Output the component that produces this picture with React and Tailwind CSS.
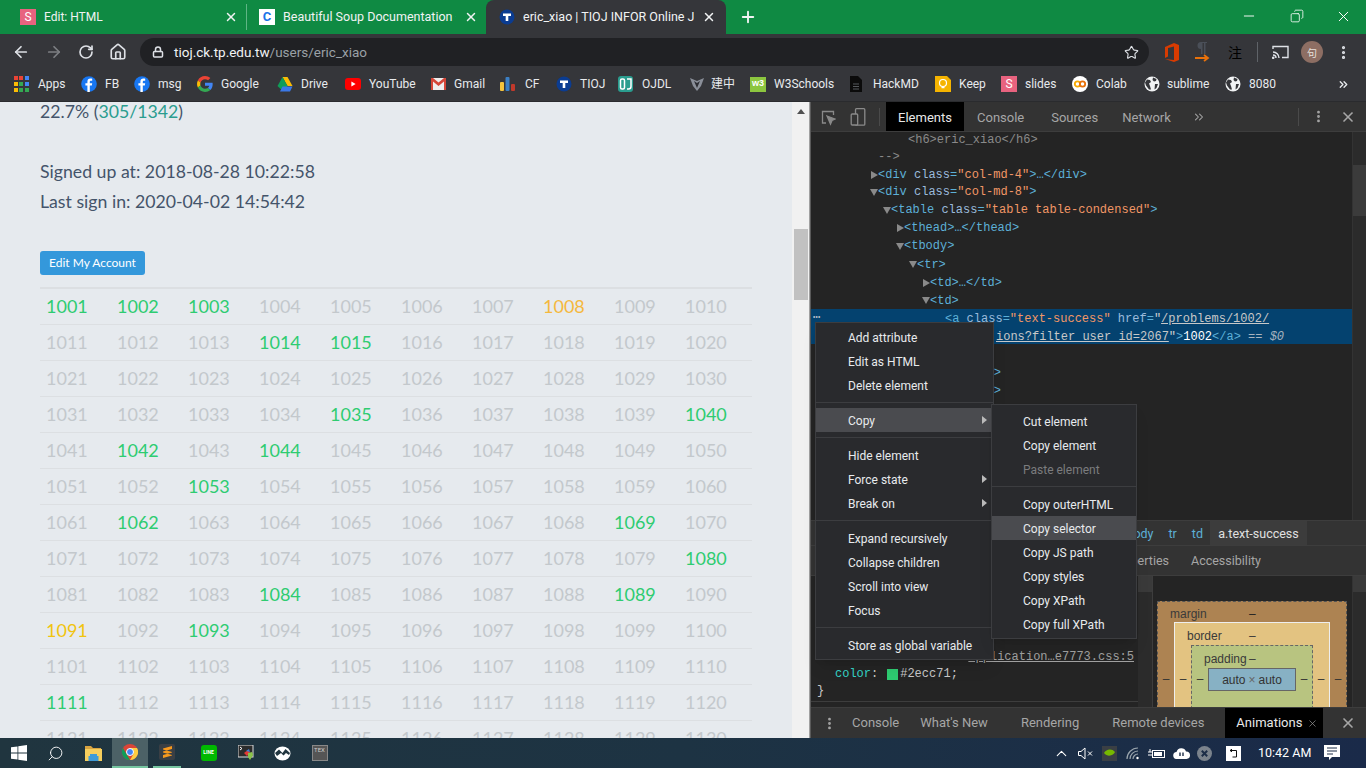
import React from 'react';
import { ArrowLeft, ArrowRight, RotateCw, Home, Lock, Star, X, Plus, Minus, Search, MoreVertical, ChevronsRight, ChevronUp, Copy as CopyIcon } from 'lucide-react';

const UI = "font-['Roboto',sans-serif]";

const SBadge = () => (
    <div className="bg-[#e8637f] text-white flex items-center justify-center w-4 h-4 text-[12px] shrink-0">S</div>
);
const TIcon = () => (
    <svg width="16" height="16" viewBox="0 0 16 16" className="shrink-0">
        <circle cx="8" cy="8" r="7.5" fill="#0b3c91" />
        <path d="M4 4.5h8v2.4H9.3V12H6.7V6.9H4z" fill="#fff" />
    </svg>
);
const FbIcon = () => (
    <svg width="16" height="16" viewBox="0 0 16 16" className="shrink-0">
        <circle cx="8" cy="8" r="7.8" fill="#1877f2" />
        <path d="M8.8 16V9.6h2l.4-2.3H8.8V6c0-.8.3-1.2 1.2-1.2h1.2v-2c-.6-.1-1.2-.2-1.8-.2-1.9 0-3 1.1-3 3.1v1.600H4.400v2.300h2V16z" fill="#fff" />
    </svg>
);
const GoogleIcon = () => (
    <svg width="16" height="16" viewBox="0 0 48 48" className="shrink-0">
        <path fill="#EA4335" d="M24 9.500c3.500 0 6.700 1.200 9.200 3.600l6.900-6.900C35.900 2.400 30.500 0 24 0 14.600 0 6.500 5.400 2.600 13.200l8 6.200C12.400 13.700 17.700 9.500 24 9.500z" />
        <path fill="#4285F4" d="M47 24.500c0-1.600-.1-3.100-.4-4.500H24v9h12.900c-.6 3-2.200 5.500-4.700 7.200l7.700 6C44.400 38.100 47 31.900 47 24.500z" />
        <path fill="#FBBC05" d="M10.500 28.600C10 27.200 9.800 25.600 9.800 24s.3-3.200.8-4.600l-8-6.200C.9 16.500 0 20.100 0 24s.9 7.500 2.600 10.800z" />
        <path fill="#34A853" d="M24 48c6.500 0 11.900-2.100 15.900-5.800l-7.700-6c-2.200 1.500-4.900 2.300-8.200 2.300-6.300 0-11.600-4.200-13.500-9.900l-8 6.200C6.500 42.600 14.600 48 24 48z" />
    </svg>
);
const DriveIcon = () => (
    <svg width="16" height="15" viewBox="0 0 16 15" className="shrink-0">
        <path d="M5.500 0h5l5 9h-5z" fill="#fbbc04" />
        <path d="M5.500 0l5 9-2.500 5-2.500-.2L0.500 9z" fill="#0f9d58" />
        <path d="M3 14.500l2.500-5h10l-2.500 5z" fill="#3b78e7" />
    </svg>
);
const YtIcon = () => (
    <svg width="16" height="12" viewBox="0 0 16 12" className="shrink-0">
        <rect width="16" height="12" rx="3" fill="#f00" />
        <path d="M6.400 3.400L10.600 6l-4.200 2.600z" fill="#fff" />
    </svg>
);
const GmailIcon = () => (
    <svg width="15" height="12" viewBox="0 0 15 12" className="shrink-0">
        <rect width="15" height="12" fill="#eee" />
        <path d="M0 0h2l5.500 4.500L13 0h2v12h-2V3.500L7.500 8 2 3.500V12H0z" fill="#d44638" />
    </svg>
);
const CfIcon = () => (
    <svg width="15" height="14" viewBox="0 0 15 14" className="shrink-0">
        <rect x="0" y="5" width="4" height="9" rx="1" fill="#f5c33b" />
        <rect x="5.500" y="0" width="4" height="14" rx="1" fill="#3b7fc4" />
        <rect x="11" y="7" width="4" height="7" rx="1" fill="#c0392b" />
    </svg>
);
const OjIcon = () => (
    <svg width="15" height="16" viewBox="0 0 15 16" className="shrink-0">
        <rect width="15" height="16" rx="3" fill="#2a9d8f" />
        <rect x="2.500" y="3" width="4" height="10" rx="1.500" fill="none" stroke="#fff" strokeWidth="1.500" />
        <path d="M9 3h4v7.500c0 1.500-1 2.500-2.500 2.500H9" fill="none" stroke="#fff" strokeWidth="1.500" />
    </svg>
);
const SpearIcon = () => (
    <svg width="14" height="14" viewBox="0 0 14 14" className="shrink-0">
        <path d="M0 1l7 3 7-3-3 8-4 5-4-5z" fill="#8a8f99" />
        <path d="M4 4l3 2 3-2-3 7z" fill="#2c2d33" />
    </svg>
);
const W3Icon = () => (
    <div className="w-4 h-[15px] bg-[#8cc63f] text-white text-[9px] font-bold flex items-center justify-center shrink-0 font-['Liberation_Sans',sans-serif]">w3</div>
);
const DocIcon = () => (
    <svg width="12" height="16" viewBox="0 0 12 16" className="shrink-0">
        <path d="M0 0h8l4 4v12H0z" fill="#0b0b0b" />
        <path d="M3 8h6M3 10.500h6M3 13h6" stroke="#55585c" strokeWidth="1" />
    </svg>
);
const KeepIcon = () => (
    <svg width="16" height="16" viewBox="0 0 16 16" className="shrink-0">
        <path d="M0 0h12l4 4v12H0z" fill="#f5b400" />
        <circle cx="8" cy="7" r="3.500" fill="none" stroke="#fff" strokeWidth="1.200" />
        <path d="M6.500 11.500h3" stroke="#fff" strokeWidth="1.500" />
    </svg>
);
const ColabIcon = () => (
    <svg width="16" height="16" viewBox="0 0 16 16" className="shrink-0">
        <circle cx="8" cy="8" r="8" fill="#fff" />
        <circle cx="5.500" cy="8" r="2.700" fill="none" stroke="#f9ab00" strokeWidth="1.800" />
        <circle cx="10.500" cy="8" r="2.700" fill="none" stroke="#e8710a" strokeWidth="1.800" />
    </svg>
);
const GlobeIcon = () => (
    <svg width="16" height="16" viewBox="0 0 16 16" className="shrink-0">
        <circle cx="8" cy="8" r="7.500" fill="#f1f3f4" />
        <path d="M3 3.500l3 .5 1 2-2 1.500 1 2.500 1 3.500-2 0-3-4-1-3zM9 1.500l3.500 1.500-.5 2-2 .5-1.500-1.500zM11 8l3 0-1.500 4-2 1.500z" fill="#35363a" />
    </svg>
);
const AppsIcon = () => (
    <div className="grid grid-cols-3 gap-[2px] w-[14px] shrink-0">
        {['#ea4335', '#ea4335', '#4285f4', '#fbbc05', '#34a853', '#4285f4', '#fbbc05', '#34a853', '#34a853'].map((c, i) => (
            <svg key={i} width="4" height="4"><rect width="4" height="4" fill={c} /></svg>
        ))}
    </div>
);

const bookmarks = [
    { w: 'w-[67px]', icon: <AppsIcon />, gap: 'gap-[10px]', label: 'Apps' },
    { w: 'w-[53px]', icon: <FbIcon />, gap: 'gap-[8px]', label: 'FB' },
    { w: 'w-[63px]', icon: <FbIcon />, gap: 'gap-[8px]', label: 'msg' },
    { w: 'w-[80px]', icon: <GoogleIcon />, gap: 'gap-[8px]', label: 'Google' },
    { w: 'w-[68px]', icon: <DriveIcon />, gap: 'gap-[8px]', label: 'Drive' },
    { w: 'w-[86px]', icon: <YtIcon />, gap: 'gap-[8px]', label: 'YouTube' },
    { w: 'w-[69px]', icon: <GmailIcon />, gap: 'gap-[8px]', label: 'Gmail' },
    { w: 'w-[56px]', icon: <CfIcon />, gap: 'gap-[10px]', label: 'CF' },
    { w: 'w-[62px]', icon: <TIcon />, gap: 'gap-[8px]', label: 'TIOJ' },
    { w: 'w-[72px]', icon: <OjIcon />, gap: 'gap-[9px]', label: 'OJDL' },
    { w: 'w-[60px]', icon: <SpearIcon />, gap: 'gap-[7px]', label: '建中' },
    { w: 'w-[100px]', icon: <W3Icon />, gap: 'gap-[8px]', label: 'W3Schools' },
    { w: 'w-[85px]', icon: <DocIcon />, gap: 'gap-[11px]', label: 'HackMD' },
    { w: 'w-[66px]', icon: <KeepIcon />, gap: 'gap-[8px]', label: 'Keep' },
    { w: 'w-[71px]', icon: <SBadge />, gap: 'gap-[8px]', label: 'slides' },
    { w: 'w-[72px]', icon: <ColabIcon />, gap: 'gap-[8px]', label: 'Colab' },
    { w: 'w-[81px]', icon: <GlobeIcon />, gap: 'gap-[7px]', label: 'sublime' },
    { w: 'w-[60px]', icon: <GlobeIcon />, gap: 'gap-[8px]', label: '8080' },
];

function Tabs() {
    return (
        <div className={`h-[34px] bg-[#0f8a43] flex text-[12.5px] text-[#f1f3f4] ${UI}`}>
            <div className="w-[246px] flex items-center pl-5 pr-2 gap-[8px]">
                <SBadge />
                <span className="flex-1 text-[12px]">Edit: HTML</span>
                <X size={14} strokeWidth={2.5} />
            </div>
            <div className="w-px h-[26px] mt-1 bg-[#5fb585]" />
            <div className="w-[239px] flex items-center pl-3 pr-2 gap-2">
                <div className="w-4 h-4 bg-white text-[#1a73e8] font-bold text-[13px] leading-4 text-center shrink-0">C</div>
                <span className="flex-1 whitespace-nowrap overflow-hidden">Beautiful Soup Documentation —</span>
                <X size={14} strokeWidth={2.5} />
            </div>
            <div className="w-[240px] bg-[#35363a] rounded-t-lg flex items-center pl-[13px] pr-[10px] gap-2">
                <TIcon />
                <span className="flex-1 whitespace-nowrap overflow-hidden">eric_xiao | TIOJ INFOR Online Jud</span>
                <X size={14} strokeWidth={2.5} />
            </div>
            <div className="ml-[13px] flex items-center">
                <Plus size={18} strokeWidth={2.5} />
            </div>
            <div className="flex-1 flex justify-end pr-[14px] pt-2 gap-[31px] text-white">
                <Minus size={16} strokeWidth={1.4} />
                <CopyIcon size={14} strokeWidth={1.4} className="mt-[1px] -scale-x-100 ml-[2px]" />
                <X size={17} strokeWidth={1.4} />
            </div>
        </div>
    );
}

function Toolbar() {
    return (
        <div className={`h-[36px] bg-[#35363a] flex items-center pl-[12px] pr-[14px] text-[#dee1e6] ${UI}`}>
            <ArrowLeft size={18} strokeWidth={2.3} />
            <ArrowRight size={18} strokeWidth={2.3} className="ml-[15px] text-[#7d7f83]" />
            <RotateCw size={16} strokeWidth={2.5} className="ml-[15px]" />
            <Home size={18} strokeWidth={2.2} className="ml-[15px]" />
            <div className="ml-[13px] w-[1009px] h-[28px] rounded-full bg-[#202124] flex items-center pl-[12px] pr-[10px]">
                <Lock size={12} strokeWidth={3} />
                <span className="ml-[10px] text-[13.5px] text-[#f1f3f4]">tioj.ck.tp.edu.tw</span>
                <span className="text-[13.5px] text-[#9aa0a6]">/users/eric_xiao</span>
                <Star size={15} strokeWidth={1.8} className="ml-auto" />
            </div>
            <svg width="15" height="19" viewBox="0 0 15 19" className="ml-[16px]">
                <path d="M0 4l9-4 5 2v15l-5 2-9-3 9 1V3.500L3 5v8.500L0 15z" fill="#d83b01" />
            </svg>
            <svg width="16" height="20" viewBox="0 0 16 20" className="ml-[15px]">
                <path d="M6 0h6v1H10.500v11H9V1H7.500v11H6V7a3.500 3.500 0 0 1 0-7z" fill="#4a4f58" />
                <path d="M0 16h12M9 13l4 3-4 3" stroke="#e8710a" strokeWidth="1.800" fill="none" />
            </svg>
            <span className="ml-[17px] text-[14px] text-black font-['Noto_Sans_CJK_TC',sans-serif]">注</span>
            <div className="ml-[15px] w-px h-[20px] bg-[#5f6368]" />
            <svg width="17" height="14" viewBox="0 0 17 14" fill="none" stroke="#dee1e6" strokeWidth="1.400" className="ml-[14px]">
                <path d="M1 4V1.500h15v11h-6M1 7a6 6 0 0 1 6 6M1 10a3 3 0 0 1 3 3" />
                <circle cx="1.200" cy="12.800" r=".6" fill="#dee1e6" />
            </svg>
            <div className="ml-[12px] w-[22px] h-[22px] rounded-full bg-[#8d6e63] text-[#e8e0dc] text-[10px] flex items-center justify-center font-['Noto_Sans_CJK_TC',sans-serif]">句</div>
            <MoreVertical size={17} strokeWidth={2.5} className="ml-[12px]" />
        </div>
    );
}

function Bookmarks() {
    return (
        <div className={`h-[32px] bg-[#35363a] flex items-center pl-[14px] pb-[3px] text-[12px] text-[#e8eaed] border-b border-[#2a2b2e] ${UI}`}>
            {bookmarks.map((b, i) => (
                <div key={i} className={`flex items-center shrink-0 ${b.w} ${b.gap}`}>
                    {b.icon}
                    <span className="whitespace-nowrap font-['Roboto','Noto_Sans_CJK_TC',sans-serif]">{b.label}</span>
                </div>
            ))}
            <ChevronsRight size={13} strokeWidth={2.5} className="ml-[52px]" />
        </div>
    );
}

const solved = [1001, 1002, 1003, 1014, 1015, 1035, 1040, 1042, 1044, 1053, 1062, 1069, 1080, 1084, 1089, 1093, 1111];
const rows = Array.from({ length: 13 }, (_, r) => Array.from({ length: 10 }, (_, c) => 1001 + r * 10 + c));

function numColor(n) {
    if (n === 1008) return 'text-[#f5b83d]';
    if (n === 1091) return 'text-[#f1c40f]';
    if (solved.includes(n)) return 'text-[#2ecc71]';
    return 'text-[#c3c8cc]';
}

function Page() {
    return (
        <div className="w-[792px] bg-[#e6eaee] overflow-hidden pl-10 pt-[1px] font-['Lato',sans-serif] text-[#44546a] text-[17.7px]">
            <p className="h-[18px] leading-[18px]">22.7% (<span className="text-[#2a9d8f]">305/1342</span>)</p>
            <p className="mt-[36px] leading-[30px]">Signed up at: 2018-08-28 10:22:58</p>
            <p className="leading-[30px]">Last sign in: 2020-04-02 14:54:42</p>
            <button className="mt-[34px] w-[105px] h-[24px] rounded-[3px] bg-[#3498db] text-white text-[12px] block">Edit My Account</button>
            <div className="mt-[12px] w-[712px] border-t-2 border-[#dcdfe2]">
                {rows.map((row, r) => (
                    <div key={r} className={`grid grid-cols-[repeat(10,71px)] items-center text-[18px] border-[#dcdfe2] ${r === 0 ? 'h-[35px]' : 'h-[36px] border-t'}`}>
                        {row.map(n => (
                            <span key={n} className={`pl-[6px] ${numColor(n)}`}>{n}</span>
                        ))}
                    </div>
                ))}
            </div>
        </div>
    );
}

function PageScrollbar() {
    return (
        <div className="w-[17px] bg-[#f1f1f1] relative flex flex-col items-center">
            <div className="mt-[7px] w-0 h-0 border-x-[4px] border-x-transparent border-b-[5px] border-b-[#505050]" />
            <div className="mt-[115px] w-[14px] h-[71px] bg-[#c1c1c1]" />
        </div>
    );
}

const Tag = ({ children }) => <span className="text-[#5db0d7]">{children}</span>;
const Attr = ({ children }) => <span className="text-[#9bbbdc]">{children}</span>;
const Val = ({ children }) => <span className="text-[#f29766]">{children}</span>;

const Tri = ({ open }) => (
    open
        ? <div className="w-0 h-0 border-x-[4px] border-x-transparent border-t-[7px] border-t-[#8a8a8a] shrink-0" />
        : <div className="w-0 h-0 border-y-[4px] border-y-transparent border-l-[7px] border-l-[#8a8a8a] shrink-0" />
);

function CodeLine({ pad, tri, h = 'h-[18px]', children }) {
    return (
        <div className={`${h} flex items-center whitespace-pre ${pad}`}>
            {tri === 'open' && <Tri open />}
            {tri === 'closed' && <Tri />}
            <span>{children}</span>
        </div>
    );
}

function ElementsPane() {
    return (
        <div className="flex-1 flex font-['Liberation_Mono',monospace] text-[12px] min-h-0">
            <div className="flex-1 overflow-hidden">
                <CodeLine h="h-[16px]" pad="pl-[97px]"><span className="text-[#8a8a8a]">{'<h6>eric_xiao</h6>'}</span></CodeLine>
                <CodeLine pad="pl-[67px]"><span className="text-[#8a8a8a]">{'-->'}</span></CodeLine>
                <CodeLine h="h-[17px]" pad="pl-[60px]" tri="closed"><Tag>{'<div '}</Tag><Attr>class</Attr><Tag>=</Tag><Val>"col-md-4"</Val><Tag>{'>…</div>'}</Tag></CodeLine>
                <CodeLine pad="pl-[59px]" tri="open"><Tag>{'<div '}</Tag><Attr>class</Attr><Tag>=</Tag><Val>"col-md-8"</Val><Tag>{'>'}</Tag></CodeLine>
                <CodeLine pad="pl-[72px]" tri="open"><Tag>{'<table '}</Tag><Attr>class</Attr><Tag>=</Tag><Val>"table table-condensed"</Val><Tag>{'>'}</Tag></CodeLine>
                <CodeLine pad="pl-[86px]" tri="closed"><Tag>{'<thead>…</thead>'}</Tag></CodeLine>
                <CodeLine pad="pl-[85px]" tri="open"><Tag>{'<tbody>'}</Tag></CodeLine>
                <CodeLine h="h-[19px]" pad="pl-[98px]" tri="open"><Tag>{'<tr>'}</Tag></CodeLine>
                <CodeLine pad="pl-[112px]" tri="closed"><Tag>{'<td>…</td>'}</Tag></CodeLine>
                <CodeLine h="h-[17px]" pad="pl-[111px]" tri="open"><Tag>{'<td>'}</Tag></CodeLine>
                <div className="h-[35px] bg-[#04426f] relative pl-[134px] pt-[1px] leading-[18px] whitespace-pre">
                    <span className="absolute left-[2px] top-[-3px] text-[#aeb9c4] font-bold">…</span>
                    <div><Tag>{'<a '}</Tag><Attr>class</Attr><Tag>=</Tag><Val>"text-success"</Val><Attr>{' href'}</Attr><Tag>=</Tag><span className="text-[#cfd0d0]">"</span><span className="text-[#c8c8c8] underline">/problems/1002/</span></div>
                    <div className="pl-[51px]"><span className="text-[#c8c8c8] underline">ions?filter_user_id=2067</span><span className="text-[#cfd0d0]">"</span><Tag>{'>'}</Tag><span className="text-white">1002</span><Tag>{'</a>'}</Tag><span className="text-[#a8b4bf]">{' == '}</span><span className="text-[#a8b4bf] italic">$0</span></div>
                </div>
                <div className="mt-[20px]">
                    <CodeLine pad="pl-[154px]"><Tag>{'</td>'}</Tag></CodeLine>
                    <CodeLine pad="pl-[154px]"><Tag>{'</tr>'}</Tag></CodeLine>
                </div>
            </div>
            <div className="w-[14px] bg-[#2b2b2b] border-l border-[#333]">
                <div className="mt-[33px] h-[51px] bg-[#3b3b3b]" />
            </div>
        </div>
    );
}

function Dash({ pad }) {
    return <div className={`w-[16px] shrink-0 text-center text-[#333] leading-4 ${pad}`}>–</div>;
}

function BoxModel() {
    return (
        <div className="flex-1 overflow-hidden pt-[25px] pl-[4px] pr-[5px] font-['Liberation_Sans',sans-serif] text-[12px] text-[#3a3a3a]">
            <div className="border border-dashed border-[#555] bg-[#ad8352] h-[180px]">
                <div className="h-[20px] flex items-center pt-[3px] pl-[12px]"><span className="w-[79px]">margin</span><span className="text-[#222]">–</span></div>
                <div className="flex">
                    <Dash pad="pt-[49px]" />
                    <div className="flex-1 border border-[#eee] bg-[#e3c381] h-[150px]">
                        <div className="h-[22px] flex items-center pt-[3px] pl-[12px]"><span className="w-[62px]">border</span><span>–</span></div>
                        <div className="flex">
                            <Dash pad="pt-[26px]" />
                            <div className="flex-1 border border-dashed border-[#666] bg-[#b8c480] h-[110px]">
                                <div className="h-[22px] flex items-center pt-[3px] pl-[12px]"><span className="w-[45px]">padding</span><span>–</span></div>
                                <div className="flex">
                                    <Dash pad="pt-[3px]" />
                                    <div className="flex-1 h-[23px] border border-[#666] bg-[#87b1c4] flex items-center justify-center gap-[3px] text-[#333]">
                                        <span>auto</span><span className="text-[#666]">×</span><span>auto</span>
                                    </div>
                                    <Dash pad="pt-[3px]" />
                                </div>
                            </div>
                            <Dash pad="pt-[26px]" />
                        </div>
                    </div>
                    <Dash pad="pt-[49px]" />
                </div>
            </div>
        </div>
    );
}

function Sidebar() {
    return (
        <div className="h-[187px] flex flex-col text-[12.5px]">
            <div className={`h-[26px] flex items-center bg-[#333] border-y border-[#3d3d3d] text-[#d0d0d0] ${UI}`}>
                <span className="ml-auto pt-[3px] text-[#5db0d7]">tbody</span>
                <span className="ml-[15px] pt-[3px] text-[#5db0d7]">tr</span>
                <span className="ml-[15px] pt-[3px] text-[#5db0d7]">td</span>
                <span className="ml-[7px] mr-[59px] w-[97px] h-full pt-[3px] bg-[#3c3c3c] flex items-center justify-center text-[#e0e0e0]">a.text-success</span>
            </div>
            <div className={`h-[30px] flex items-center pt-[1px] bg-[#333] border-b border-[#3d3d3d] text-[#a6a6a6] ${UI}`}>
                <span className="w-[358px] text-right">Properties</span>
                <span className="ml-[22px]">Accessibility</span>
            </div>
            <div className="flex-1 flex min-h-0 bg-[#242424]">
                <div className="w-[327px] font-['Liberation_Mono',monospace] text-[12px] text-[#c9c9c9] flex flex-col justify-end pb-[5px]">
                    <div className="h-[16px] mb-[2px] text-right pr-[4px] text-[#a0a0a0] underline">application…e7773.css:5</div>
                    <div className="h-[16px] pl-[24px] flex items-center">
                        <span className="text-[#35d4c7]">color</span><span>:</span>
                        <div className="w-[11px] h-[11px] bg-[#2ecc71] ml-[9px] mr-[2px]" />
                        <span>#2ecc71;</span>
                    </div>
                    <div className="h-[16px] pl-[6px]">{'}'}</div>
                    <div className="mt-[3px] h-px bg-[#3d3d3d]" />
                </div>
                <div className="w-[15px] bg-[#2b2b2b] border-r border-[#3d3d3d]">
                    <div className="h-[16px] bg-[#3a3a3a]" />
                </div>
                <BoxModel />
                <div className="w-[14px] bg-[#2b2b2b] border-l border-[#333]">
                    <div className="h-[16px] bg-[#3a3a3a]" />
                </div>
            </div>
        </div>
    );
}

function DevTools() {
    return (
        <div className="flex-1 flex flex-col bg-[#242424] border-l border-[#5a5a5a] min-w-0 overflow-hidden">
            <div className={`h-[30px] flex items-center bg-[#333] border-b border-[#3d3d3d] text-[13px] text-[#a6a6a6] ${UI}`}>
                <svg width="15" height="16" viewBox="0 0 15 16" fill="none" stroke="#8a8a8a" strokeWidth="1.300" className="ml-[10px] mt-[2px]">
                    <path d="M5 13H1.500V1.500h11V5" />
                    <path d="M6 6l8 3-3 1.500L9.500 14z" fill="#8a8a8a" />
                </svg>
                <svg width="16" height="18" viewBox="0 0 15 18" fill="none" stroke="#8a8a8a" strokeWidth="1.300" className="ml-[14px]">
                    <rect x="5" y=".7" width="9.300" height="16.500" rx="1" />
                    <rect x=".7" y="6" width="6.500" height="11" rx="1" fill="#333" />
                </svg>
                <div className="ml-[13px] w-px h-[18px] bg-[#4a4a4a]" />
                <div className="ml-[6px] w-[78px] h-full pt-[2px] bg-black text-[#e8e8e8] flex items-center justify-center">Elements</div>
                <span className="ml-[13px] pt-[2px]">Console</span>
                <span className="ml-[27px] pt-[2px]">Sources</span>
                <span className="ml-[24px] pt-[2px]">Network</span>
                <ChevronsRight size={14} strokeWidth={1.8} className="ml-[21px]" />
                <div className="ml-auto w-px h-[18px] bg-[#4a4a4a]" />
                <MoreVertical size={15} strokeWidth={2.5} className="ml-[12px]" />
                <X size={16} strokeWidth={2.5} className="ml-[14px] mr-[10px]" />
            </div>
            <ElementsPane />
            <Sidebar />
            <div className={`h-[31px] flex items-center bg-[#333] border-t border-[#3d3d3d] text-[13px] text-[#a6a6a6] ${UI}`}>
                <MoreVertical size={15} strokeWidth={2.5} className="ml-[11px]" />
                <span className="ml-[15px]">Console</span>
                <span className="ml-[21px]">What's New</span>
                <span className="ml-[33px]">Rendering</span>
                <span className="ml-[33px]">Remote devices</span>
                <div className="ml-[21px] w-[98px] h-full bg-black text-[#e8e8e8] flex items-center pl-[11px] gap-[5px]">
                    <span>Animations</span>
                    <X size={11} strokeWidth={1.5} className="text-[#999]" />
                </div>
                <X size={16} strokeWidth={2.5} className="ml-auto mr-[10px]" />
            </div>
        </div>
    );
}

function MenuItem({ label, active, disabled, arrow, sub }) {
    return (
        <div className={`h-6 flex items-center ${sub ? 'pl-[31px]' : 'pl-[32px]'} pr-[6px] ${active ? 'bg-[#4a4b4f]' : ''} ${disabled ? 'text-[#7b7c7e]' : 'text-[#e8eaed]'}`}>
            <span className="flex-1 pt-[2px]">{label}</span>
            {arrow && <div className="w-0 h-0 border-y-[4px] border-y-transparent border-l-[5px] border-l-[#bbb]" />}
        </div>
    );
}
const MenuSep = () => <div className="my-[5px] h-px bg-[#3c3d40]" />;

function ContextMenu() {
    return (
        <>
            <div className={`absolute left-[815px] top-[322px] w-[179px] h-[338px] bg-[#292a2d] border border-[#3c3d40] py-[2px] text-[12px] shadow-lg ${UI}`}>
                <MenuItem label="Add attribute" />
                <MenuItem label="Edit as HTML" />
                <MenuItem label="Delete element" />
                <MenuSep />
                <MenuItem label="Copy" active arrow />
                <MenuSep />
                <MenuItem label="Hide element" />
                <MenuItem label="Force state" arrow />
                <MenuItem label="Break on" arrow />
                <MenuSep />
                <MenuItem label="Expand recursively" />
                <MenuItem label="Collapse children" />
                <MenuItem label="Scroll into view" />
                <MenuItem label="Focus" />
                <MenuSep />
                <MenuItem label="Store as global variable" />
            </div>
            <div className={`absolute left-[991px] top-[404px] w-[146px] h-[235px] bg-[#292a2d] border border-[#3c3d40] py-[4px] text-[12px] shadow-lg ${UI}`}>
                <MenuItem sub label="Cut element" />
                <MenuItem sub label="Copy element" />
                <MenuItem sub disabled label="Paste element" />
                <MenuSep />
                <MenuItem sub label="Copy outerHTML" />
                <MenuItem sub active label="Copy selector" />
                <MenuItem sub label="Copy JS path" />
                <MenuItem sub label="Copy styles" />
                <MenuItem sub label="Copy XPath" />
                <MenuItem sub label="Copy full XPath" />
            </div>
        </>
    );
}

function Taskbar() {
    return (
        <div className={`h-[30px] bg-gradient-to-r from-[#20353f] via-[#1d3343] to-[#1a2a49] flex items-center text-white ${UI}`}>
            <div className="w-[37px] flex justify-center">
                <svg width="16" height="16" viewBox="0 0 16 16" fill="#fff"><path d="M0 2.300L6.500 1.400V7.600H0zM7.300 1.300L16 0V7.600H7.300zM0 8.400H6.500V14.600L0 13.700zM7.300 8.400H16V16L7.300 14.700z" /></svg>
            </div>
            <div className="w-[37px] flex justify-center"><Search size={17} strokeWidth={1.3} className="-scale-x-100" /></div>
            <div className="w-[38px] flex justify-center">
                <svg width="17" height="15" viewBox="0 0 17 15">
                    <path d="M0 0h6l2 2h8v4H0z" fill="#d9a441" />
                    <path d="M0 3h17v12H0z" fill="#f6ce5d" />
                    <path d="M5 8h7v2h1.500v5H3.500v-5H5z" fill="#3f9bd9" />
                </svg>
            </div>
            <div className="w-[36px] h-full bg-[#4c6166] border-b-[2px] border-[#76c5a0] flex justify-center items-center">
                <svg width="16" height="16" viewBox="0 0 16 16">
                    <circle cx="8" cy="8" r="8" fill="#db4437" />
                    <path d="M8 16a8 8 0 0 1-7-12l4 7z" fill="#0f9d58" />
                    <path d="M8 4h7a8 8 0 0 1-7 12l3.500-6z" fill="#ffcd40" />
                    <circle cx="8" cy="8" r="3.500" fill="#4285f4" stroke="#fff" strokeWidth="1" />
                </svg>
            </div>
            <div className="ml-[5px] w-[28px] h-full border-b-[2px] border-[#76c5a0] flex justify-center items-center">
                <div className="w-4 h-4 bg-[#3a3f44] rounded-[2px] flex items-center justify-center">
                    <svg width="9" height="12" viewBox="0 0 9 12"><path d="M0 2.500L9 0v3L0 5.500zM0 6.500l9 2.500v-3L0 3.500zM0 9l9-2.500v3L0 12z" fill="#f79a1e" /></svg>
                </div>
            </div>
            <div className="ml-[9px] w-[37px] flex justify-center">
                <div className="w-4 h-4 rounded-[3px] bg-[#00b900] flex items-center justify-center text-[5px] font-bold">LINE</div>
            </div>
            <div className="w-[37px] flex justify-center">
                <svg width="16" height="16" viewBox="0 0 16 16">
                    <rect width="15" height="12" fill="#2c2c2c" stroke="#ddd" />
                    <path d="M2 2l2 1.500L2 5" stroke="#fff" fill="none" />
                    <path d="M6 8l4-3 2 3-3 3z" fill="#e53935" />
                    <path d="M10 8l4-1 1 3-3 5-2-3z" fill="#8bc34a" />
                    <path d="M8 6l3-2 1 3z" fill="#3f7fd9" />
                </svg>
            </div>
            <div className="w-[37px] flex justify-center">
                <svg width="17" height="15" viewBox="0 0 17 15">
                    <ellipse cx="8.500" cy="7.500" rx="8" ry="7" fill="#fff" />
                    <path d="M1 7l4-3.500 3.500 3.500 3-4L16 7l-1 2-3-2-2.500 2.500L7 7 3 10z" fill="#20353f" />
                </svg>
            </div>
            <div className="w-[37px] flex justify-center">
                <div className="w-4 h-4 bg-[#555] border border-[#888] text-[6px] leading-[7px] text-center text-[#ccc]">TEX</div>
            </div>
            <div className="ml-auto flex items-center">
                <ChevronUp size={17} strokeWidth={1.5} />
                <svg width="16" height="13" viewBox="0 0 16 13" fill="none" stroke="#fff" strokeWidth="1" className="ml-[8px]">
                    <path d="M.5 4.500h2.500L7 1v11L3 8.500H.5zM10 4.500l4 4M14 4.500l-4 4" />
                </svg>
                <div className="ml-[8px] w-[15px] h-[15px] bg-[#3a3f44] flex items-center justify-center">
                    <svg width="11" height="8" viewBox="0 0 11 8"><path d="M0 4c2-4 8-5 11-1-1 3-7 6-11 1z" fill="#76b900" /></svg>
                </div>
                <svg width="15" height="13" viewBox="0 0 15 13" fill="none" stroke="#9aa5ad" strokeWidth="1.200" className="ml-[9px]">
                    <path d="M1 12a11 11 0 0 1 11-11M4 12a8 8 0 0 1 8-8M7 12a5 5 0 0 1 5-5" />
                    <circle cx="11.500" cy="11" r="1.200" fill="#fff" stroke="none" />
                </svg>
                <svg width="17" height="11" viewBox="0 0 17 11" fill="none" stroke="#fff" className="ml-[7px]">
                    <rect x="4.500" y="2.500" width="12" height="7" />
                    <rect x="6" y="4" width="8" height="4" fill="#fff" stroke="none" />
                    <path d="M0 4h4M0 7h4M2 1v3" />
                </svg>
                <svg width="17" height="11" viewBox="0 0 17 11" className="ml-[8px]">
                    <path d="M4 11a3.500 3.500 0 0 1-.5-7A5 5 0 0 1 13 3.500 3.700 3.700 0 0 1 13.500 11z" fill="#fff" />
                    <path d="M7 4.500v3.500M10 4.500v3.500" stroke="#1c2d47" strokeWidth="1.400" />
                </svg>
                <svg width="15" height="15" viewBox="0 0 15 15" className="ml-[7px]">
                    <circle cx="7.500" cy="7.500" r="7.500" fill="#7b838c" />
                    <path d="M4.800 4.800l5.400 5.400M10.200 4.800l-5.400 5.400" stroke="#1c2d47" strokeWidth="2" />
                </svg>
                <div className="ml-[14px] w-[15px] h-[15px] bg-white flex items-center justify-center">
                    <svg width="9" height="9" viewBox="0 0 9 9" fill="none" stroke="#111" strokeWidth="1"><path d="M1 1.500h6.500V8H3.500M1 1.500l2-1.300M1 1.500l2 1.300" /></svg>
                </div>
                <span className="ml-[17px] text-[12.5px] w-[50px] whitespace-nowrap">10:42 AM</span>
                <svg width="17" height="16" viewBox="0 0 17 16" className="ml-[16px] mr-[25px]">
                    <path d="M0 0h16v12H8l-3 3v-3H0z" fill="#fff" />
                    <path d="M3 3h10M3 6h10M3 9h6" stroke="#1c2d47" />
                </svg>
            </div>
        </div>
    );
}

export default function App() {
    return (
        <div className="h-screen w-[1366px] relative overflow-hidden flex flex-col">
            <Tabs />
            <Toolbar />
            <Bookmarks />
            <div className="h-[636px] flex overflow-hidden">
                <Page />
                <PageScrollbar />
                <div className="w-px bg-[#a0a0a0]" />
                <DevTools />
            </div>
            <Taskbar />
            <ContextMenu />
        </div>
    );
}
